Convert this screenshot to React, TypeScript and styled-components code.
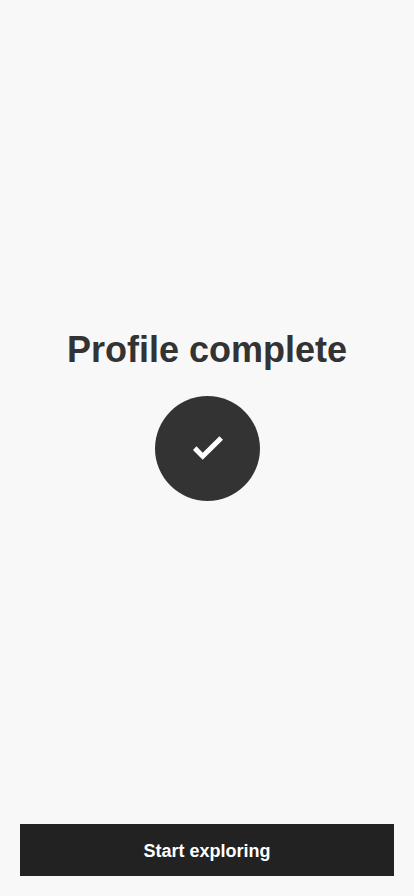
import React from "react";
import styled, { createGlobalStyle } from "styled-components";

const GlobalStyle = createGlobalStyle`
  * { box-sizing: border-box; }
  body {
    margin: 0;
    background: #f8f8f8;
    font-family: "Liberation Sans", Arial, Helvetica, sans-serif;
  }
`;

const Screen = styled.main`
  display: flex;
  flex-direction: column;
  min-height: 100vh;
  padding: 20px;
`;

const Confirmation = styled.section`
  flex: 1;
  display: flex;
  flex-direction: column;
  align-items: center;
  justify-content: center;
  gap: 24px;
  padding-bottom: 16px;
  text-align: center;
`;

const Title = styled.h1`
  margin: 0;
  color: #333333;
  font-size: 36px;
  line-height: 44px;
  font-weight: 700;
`;

const Badge = styled.div`
  display: flex;
  align-items: center;
  justify-content: center;
  width: 105px;
  height: 105px;
  border-radius: 50%;
  background: #333333;
`;

const PrimaryButton = styled.button`
  width: 100%;
  padding: 15px 16px 13px;
  border: 0;
  border-radius: 0;
  background: #222222;
  color: #ffffff;
  font-family: inherit;
  font-size: 18px;
  line-height: 24px;
  font-weight: 700;
  cursor: pointer;
`;

export default function App() {
  return (
    <>
      <GlobalStyle />
      <Screen>
        <Confirmation>
          <Title>Profile complete</Title>
          <Badge>
            <svg width="31" height="24" viewBox="0 0 31 24" aria-hidden="true">
              <path d="M1 13.9 4.5 10.3 10.7 16.7 27.4 0.3 31 3.8 10.7 23.8Z" fill="#fff" />
            </svg>
          </Badge>
        </Confirmation>
        <PrimaryButton type="button">Start exploring</PrimaryButton>
      </Screen>
    </>
  );
}
